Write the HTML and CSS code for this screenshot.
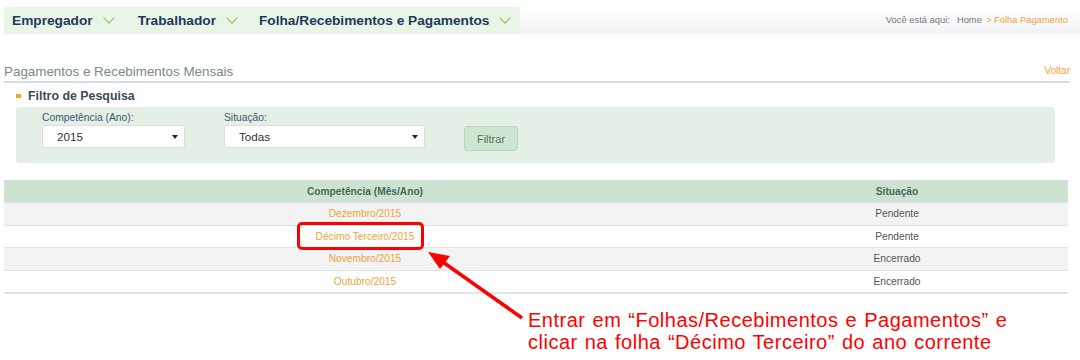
FILE: index.html
```html
<!DOCTYPE html>
<html lang="pt-BR">
<head>
  <meta charset="UTF-8">
  <meta name="viewport" content="width=device-width, initial-scale=1.0">
  <title>Folha Pagamento</title>
  <link rel="stylesheet" href="styles.css">
</head>
<body>
  <div class="topbar">
    <ul class="menu">
      <li>Empregador <span class="chev"></span></li>
      <li>Trabalhador <span class="chev"></span></li>
      <li>Folha/Recebimentos e Pagamentos <span class="chev"></span></li>
    </ul>
    <div class="trail">
      <span class="trail-label">Você está aqui:</span>
      <span>Home</span>
      <span class="trail-current">&gt; Folha Pagamento</span>
    </div>
  </div>

  <div class="page-head">
    <h1>Pagamentos e Recebimentos Mensais</h1>
    <a class="back">Voltar</a>
  </div>

  <h2 class="filter-title">Filtro de Pesquisa</h2>
  <div class="filter-panel">
    <div class="field">
      <label>Competência (Ano):</label>
      <div class="select small">2015</div>
    </div>
    <div class="field">
      <label>Situação:</label>
      <div class="select wide">Todas</div>
    </div>
    <button class="btn">Filtrar</button>
  </div>

  <table class="grid">
    <thead>
      <tr><th class="col-comp">Competência (Mês/Ano)</th><th>Situação</th></tr>
    </thead>
    <tbody>
      <tr><td><a>Dezembro/2015</a></td><td>Pendente</td></tr>
      <tr><td><a class="marked">Décimo Terceiro/2015</a></td><td>Pendente</td></tr>
      <tr><td><a>Novembro/2015</a></td><td>Encerrado</td></tr>
      <tr><td><a>Outubro/2015</a></td><td>Encerrado</td></tr>
    </tbody>
  </table>

  <svg class="arrow" width="1080" height="360" viewBox="0 0 1080 360">
    <line x1="522" y1="318" x2="440" y2="260" stroke="#ff0000" stroke-width="3.5"/>
    <polygon points="428,252 450,256 440,269" fill="#ff0000"/>
  </svg>
  <p class="note">Entrar em “Folhas/Recebimentos e Pagamentos” e<br>clicar na folha “Décimo Terceiro” do ano corrente</p>
</body>
</html>
```

FILE: styles.css
```css
body {
  margin: 0;
  font-family: "Liberation Sans", Arial, sans-serif;
  background: #fff;
  color: #555;
  position: relative;
  width: 1080px;
  height: 360px;
  overflow: hidden;
}
.topbar {
  display: flex;
  margin: 7px 0 0 4px;
  height: 27px;
}
.menu {
  list-style: none;
  margin: 0;
  padding: 0 0 0 8px;
  width: 508px;
  display: flex;
  align-items: center;
  gap: 23px;
  background: #e9f5e7;
}
.menu li {
  font-size: 13.7px;
  font-weight: bold;
  color: #1e3a5c;
  display: flex;
  align-items: center;
  gap: 10px;
}
.menu li:first-child { margin-right: 2px; }
.chev {
  width: 7px;
  height: 7px;
  border-right: 1.5px solid #8cc152;
  border-bottom: 1.5px solid #8cc152;
  transform: rotate(45deg);
  margin: -5px 0 0 2px;
}
.trail {
  flex: 1;
  display: flex;
  justify-content: flex-end;
  align-items: flex-start;
  gap: 4px;
  padding: 7px 12px 0 0;
  font-size: 9.4px;
  color: #777;
  background: linear-gradient(#fff, #f1f3f6);
}
.trail-label { margin-right: 3px; }
.trail-current { color: #f0a33a; }
.page-head {
  display: flex;
  justify-content: space-between;
  align-items: flex-end;
  margin: 30px 10px 0 4px;
  padding-bottom: 2px;
  border-bottom: 2px solid #d5dde5;
}
.page-head h1 {
  margin: 0;
  font-size: 13.4px;
  font-weight: normal;
  color: #7a8b7e;
}
.back {
  font-size: 10px;
  color: #f0a33a;
  margin-bottom: 3px;
}
.filter-title {
  margin: 6px 0 0 16px;
  font-size: 12.4px;
  color: #3c4a5c;
  display: flex;
  align-items: center;
  gap: 7px;
}
.filter-title::before {
  content: "";
  width: 5px;
  height: 4px;
  background: #f5a623;
}
.filter-panel {
  display: flex;
  align-items: flex-start;
  gap: 39px;
  margin: 4px 25px 0 16px;
  padding: 5px 0 10px 26px;
  height: 41px;
  background: #e4f0e5;
  border-radius: 3px;
}
.field {
  display: flex;
  flex-direction: column;
  gap: 2px;
}
.field label {
  font-size: 10.3px;
  color: #3d5876;
}
.select {
  height: 23px;
  box-sizing: border-box;
  background: #fff;
  border: 1px solid #d9dfd9;
  border-radius: 3px;
  padding: 4px 0 0 14px;
  font-size: 11.7px;
  color: #333;
  position: relative;
}
.select::after {
  content: "";
  position: absolute;
  right: 6px;
  top: 9px;
  border-left: 3px solid transparent;
  border-right: 3px solid transparent;
  border-top: 4px solid #222;
}
.select.small { width: 143px; }
.select.wide { width: 201px; }
.btn {
  margin-top: 14px;
  width: 54px;
  height: 25px;
  background: #cde6d1;
  border: 1px solid #b9d9be;
  border-radius: 3px;
  color: #5c6e60;
  font-family: inherit;
  font-size: 11px;
}
.grid {
  margin: 17px 0 0 4px;
  width: 1064px;
  border-collapse: collapse;
  font-size: 10.2px;
}
.grid th {
  background: #cce3d2;
  color: #476a56;
  height: 22px;
  padding: 0;
  font-weight: bold;
}
.col-comp { width: 722px; }
.grid td {
  text-align: center;
  height: 21.5px;
  padding: 0;
  border-top: 1px solid #e2e2e2;
  color: #555;
}
.grid tbody tr:nth-child(odd) td { background: #f3f3f3; }
.grid tbody tr:last-child td { border-bottom: 2px solid #dde4ee; }
.grid a { color: #f0a33a; }
.marked { position: relative; }
.marked::before {
  content: "";
  position: absolute;
  left: -19px;
  right: -10px;
  top: -9px;
  bottom: -8px;
  border: 3px solid #ff0000;
  border-radius: 5px;
}
.arrow {
  position: absolute;
  left: 0;
  top: 0;
  pointer-events: none;
}
.note {
  position: absolute;
  left: 528px;
  top: 309px;
  margin: 0;
  font-size: 20px;
  line-height: 22px;
  letter-spacing: 0.5px;
  word-spacing: 1px;
  color: #ff0000;
  white-space: nowrap;
}
```
